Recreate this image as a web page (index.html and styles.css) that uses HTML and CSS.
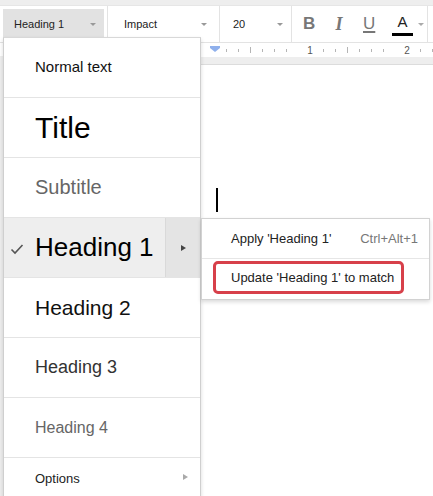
FILE: index.html
```html
<!DOCTYPE html>
<html lang="en">
<head>
    <meta charset="UTF-8">
    <meta name="viewport" content="width=device-width, initial-scale=1.0">
    <title>Paragraph styles</title>
    <link rel="stylesheet" href="styles.css">
</head>
<body>
    <div class="toolbar">
        <div class="tb-select tb-style active">Heading 1<span class="caret"></span></div>
        <div class="tb-select tb-font">Impact<span class="caret"></span></div>
        <div class="tb-select tb-size">20<span class="caret"></span></div>
        <div class="tb-format">
            <span class="fmt fmt-b">B</span>
            <span class="fmt fmt-i">I</span>
            <span class="fmt fmt-u">U</span>
            <span class="fmt fmt-a">A<span class="color-bar"></span></span>
            <span class="caret"></span>
        </div>
    </div>

    <div class="ruler-row">
        <div class="ruler">
            <svg width="240" height="14" viewBox="0 0 240 14">
                <g stroke="#b5b5b5" stroke-width="1">
                    <line x1="26.5" y1="6" x2="26.5" y2="9"/>
                    <line x1="38.5" y1="6" x2="38.5" y2="9"/>
                    <line x1="50.5" y1="4" x2="50.5" y2="10"/>
                    <line x1="62.5" y1="6" x2="62.5" y2="9"/>
                    <line x1="74.5" y1="6" x2="74.5" y2="9"/>
                    <line x1="86.5" y1="6" x2="86.5" y2="9"/>
                    <line x1="123.5" y1="6" x2="123.5" y2="9"/>
                    <line x1="135.5" y1="6" x2="135.5" y2="9"/>
                    <line x1="147.5" y1="4" x2="147.5" y2="10"/>
                    <line x1="159.5" y1="6" x2="159.5" y2="9"/>
                    <line x1="171.5" y1="6" x2="171.5" y2="9"/>
                    <line x1="183.5" y1="6" x2="183.5" y2="9"/>
                    <line x1="220.5" y1="6" x2="220.5" y2="9"/>
                    <line x1="232.5" y1="6" x2="232.5" y2="9"/>
                </g>
                <text x="110" y="11" font-size="10" fill="#555" text-anchor="middle" font-family="Liberation Sans, Arial, sans-serif">1</text>
                <text x="207" y="11" font-size="10" fill="#555" text-anchor="middle" font-family="Liberation Sans, Arial, sans-serif">2</text>
                <path d="M10 3 H20 V5 L15 9 L10 5 Z" fill="#8fb0ec"/>
            </svg>
        </div>
    </div>

    <div class="canvas">
        <div class="page">
            <div class="cursor"></div>
        </div>
    </div>

    <div class="style-menu">
        <div class="style-item s-normal">Normal text</div>
        <div class="style-item s-title">Title</div>
        <div class="style-item s-subtitle">Subtitle</div>
        <div class="style-item s-h1 selected">
            <svg class="check" width="14" height="12" viewBox="0 0 14 12">
                <path d="M1.5 6.5 L5 10 L12.5 2" fill="none" stroke="#555" stroke-width="1.6"/>
            </svg>
            <span class="label">Heading 1</span>
            <span class="sub-btn"><span class="arrow"></span></span>
        </div>
        <div class="style-item s-h2">Heading 2</div>
        <div class="style-item s-h3">Heading 3</div>
        <div class="style-item s-h4">Heading 4</div>
        <div class="style-item s-options">Options<span class="arrow light"></span></div>
    </div>

    <div class="sub-menu">
        <div class="sub-item">
            <span>Apply 'Heading 1'</span>
            <span class="shortcut">Ctrl+Alt+1</span>
        </div>
        <div class="sub-item update">
            <span class="highlight">Update 'Heading 1' to match</span>
        </div>
    </div>
</body>
</html>
```

FILE: styles.css
```css
* {
    margin: 0;
    padding: 0;
    box-sizing: border-box;
}

body {
    width: 433px;
    height: 496px;
    overflow: hidden;
    position: relative;
    background: #eeeeee;
    font-family: 'Liberation Sans', Arial, sans-serif;
    color: #222;
}

/* Toolbar */
.toolbar {
    margin-top: 5px;
    height: 37px;
    background: #fff;
    border-top: 1px solid #e6e6e6;
    display: flex;
    align-items: stretch;
}

.tb-select {
    position: relative;
    display: flex;
    align-items: center;
    font-size: 11px;
    color: #222;
    border-right: 1px solid #e3e3e3;
}

.tb-style {
    width: 108px;
    padding-left: 14px;
    isolation: isolate;
}

.tb-style.active::before {
    content: "";
    position: absolute;
    left: 3px;
    top: 3px;
    width: 101px;
    height: 28px;
    background: #e2e2e2;
    z-index: -1;
}

.tb-font {
    width: 112px;
    padding-left: 16px;
}

.tb-size {
    width: 72px;
    padding-left: 13px;
}

.tb-select .caret {
    position: absolute;
    top: 17px;
}

.tb-style .caret { left: 90px; }
.tb-font .caret { left: 93px; }
.tb-size .caret { left: 57px; }

.caret {
    display: inline-block;
    width: 0;
    height: 0;
    border-left: 3px solid transparent;
    border-right: 3px solid transparent;
    border-top: 3px solid #999;
}

.tb-format {
    width: 136px;
    display: flex;
    align-items: center;
    padding-left: 11px;
    border-right: 1px solid #e3e3e3;
    color: #777;
}

.fmt {
    display: inline-block;
    text-align: center;
    font-size: 17px;
    line-height: 20px;
}

.fmt-b {
    font-weight: bold;
    width: 12px;
    margin-right: 19px;
}

.fmt-i {
    font-family: 'Liberation Serif', 'Times New Roman', serif;
    font-style: italic;
    font-weight: bold;
    font-size: 18px;
    width: 10px;
    margin-right: 19px;
}

.fmt-u {
    width: 12px;
    text-decoration: underline;
    text-decoration-thickness: 2px;
    text-underline-offset: 2px;
    margin-right: 17px;
}

.fmt-a {
    position: relative;
    width: 21px;
    color: #222;
    font-size: 15px;
    margin-top: -4px;
}

.color-bar {
    position: absolute;
    left: 0;
    right: 0;
    bottom: -4px;
    height: 3px;
    background: #000;
}

.tb-format .caret {
    margin-left: 5px;
    border-top-color: #aaa;
}

/* Ruler */
.ruler-row {
    height: 14px;
    background: #fff;
    border-top: 1px solid #e3e3e3;
    padding-left: 200px;
}

.ruler {
    height: 14px;
    background: #fff;
}

.ruler svg {
    display: block;
}

/* Document canvas */
.canvas {
    padding: 8px 0 0 200px;
    height: 460px;
}

.page {
    height: 100%;
    background: #fff;
    border-left: 1px solid #d6d6d6;
    border-top: 1px solid #dcdcdc;
    padding: 123px 0 0 15px;
}

.cursor {
    width: 2px;
    height: 24px;
    background: #000;
}

/* Paragraph style dropdown */
.style-menu {
    position: absolute;
    left: 3px;
    top: 37px;
    width: 198px;
    background: #fff;
    border: 1px solid #cfcfcf;
    border-top: 1px solid #d8d8d8;
    box-shadow: 0 2px 4px rgba(0, 0, 0, 0.15);
}

.style-item {
    position: relative;
    height: 60px;
    display: flex;
    align-items: center;
    padding-left: 31px;
    border-bottom: 1px solid #e4e4e4;
    color: #000;
}

.s-normal { font-size: 15px; height: 60px; color: #111; padding-bottom: 2px; }
.s-title { font-size: 30px; }
.s-subtitle { font-size: 20px; color: #666; }
.s-h1 { font-size: 26px; }
.s-h2 { font-size: 21px; color: #111; }
.s-h3 { font-size: 18px; color: #333; }
.s-h4 { font-size: 16px; color: #666; }

.s-options {
    font-size: 13px;
    color: #222;
    border-bottom: none;
    height: 42px;
    padding-bottom: 2px;
}

.style-item.selected {
    background: #eeeeee;
}

.check {
    position: absolute;
    left: 6px;
    top: 25px;
}

.sub-btn {
    position: absolute;
    right: 0;
    top: 0;
    width: 35px;
    height: 59px;
    background: #e4e4e4;
    border-left: 1px solid #d9d9d9;
    display: flex;
    align-items: center;
    justify-content: center;
}

.arrow {
    display: inline-block;
    width: 0;
    height: 0;
    border-top: 3.5px solid transparent;
    border-bottom: 3.5px solid transparent;
    border-left: 5px solid #444;
}

.arrow.light {
    position: absolute;
    left: 179px;
    top: 16px;
    border-left-color: #aaa;
}

/* Submenu */
.sub-menu {
    position: absolute;
    left: 201px;
    top: 218px;
    width: 229px;
    background: #fff;
    border: 1px solid #d2d2d2;
    box-shadow: 0 2px 4px rgba(0, 0, 0, 0.15);
    font-size: 13px;
    color: #222;
}

.sub-item {
    height: 40px;
    display: flex;
    align-items: center;
    justify-content: space-between;
    padding: 0 11px 0 29px;
}

.sub-item:first-child {
    border-bottom: 1px solid #e6e6e6;
}

.shortcut {
    color: #777;
}

.sub-item.update {
    height: 40px;
    padding: 2px 0 5px 11px;
    align-items: stretch;
}

.highlight {
    display: inline-flex;
    align-items: center;
    width: 191px;
    border: 3px solid #d7404a;
    border-radius: 5px;
    padding: 0 0 1px 15px;
}
```
